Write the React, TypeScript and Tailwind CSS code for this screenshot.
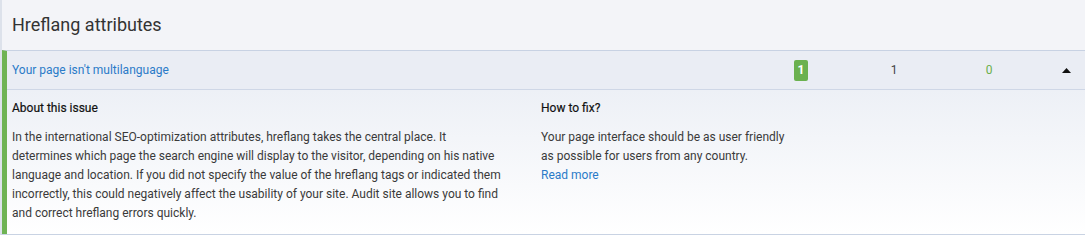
export default function App() {
  return (
    <div className="w-[1085px] h-[236px] bg-white font-['Roboto',sans-serif] text-[#333]">
      <div className="border-l-2 border-[#dde2eb] border-b border-b-[#c9d3e3]">
        <div className="h-[50px] flex items-center pl-[10px] pb-[2px] bg-[#f3f4f8]">
          <h2 className="text-[18px] text-[#333]">Hreflang attributes</h2>
        </div>
        <div className="border-t border-[#c8d2e3] border-l-[5px] border-l-[#6fb354]">
          <div className="h-[39px] flex items-center bg-[#eaedf4] border-b border-[#cfd7e6]">
            <a className="flex-1 pl-[5px] text-[12px] text-[#2a7bc8] cursor-pointer">
              Your page isn't multilanguage
            </a>
            <div className="w-[92px] flex justify-center">
              <span className="w-[14px] h-[21px] rounded-[2px] bg-[#6bb14f] text-white text-[12px] font-bold flex items-center justify-center">
                1
              </span>
            </div>
            <div className="w-[94px] text-center text-[12px] text-[#444]">1</div>
            <div className="w-[96px] text-center text-[12px] text-[#6ab04c]">0</div>
            <div className="w-[48px] flex justify-end pr-[14px]">
              <svg width="9" height="5" viewBox="0 0 9 5">
                <path d="M4.5 0 L9 5 L0 5 Z" fill="#111" />
              </svg>
            </div>
          </div>
          <div className="h-[144px] overflow-hidden flex bg-gradient-to-b from-[#edf0f6] to-white pt-[9px] text-[12px] leading-[19px]">
            <div className="w-[534px] pl-[5px] pr-[38px]">
              <h3 className="font-normal text-[#111] [-webkit-text-stroke:0.2px_#111]">About this issue</h3>
              <p className="mt-[10px] text-[#3a3a3a]">
                In the international SEO-optimization attributes, hreflang takes the central place. It
                determines which page the search engine will display to the visitor, depending on his native
                language and location. If you did not specify the value of the hreflang tags or indicated them
                incorrectly, this could negatively affect the usability of your site. Audit site allows you to find
                and correct hreflang errors quickly.
              </p>
            </div>
            <div className="w-[252px]">
              <h3 className="font-normal text-[#111] [-webkit-text-stroke:0.2px_#111]">How to fix?</h3>
              <p className="mt-[10px] text-[#3a3a3a]">
                Your page interface should be as user friendly as possible for users from any country.
              </p>
              <a className="block text-[#2a7bc8] cursor-pointer">Read more</a>
            </div>
          </div>
        </div>
      </div>
    </div>
  );
}
